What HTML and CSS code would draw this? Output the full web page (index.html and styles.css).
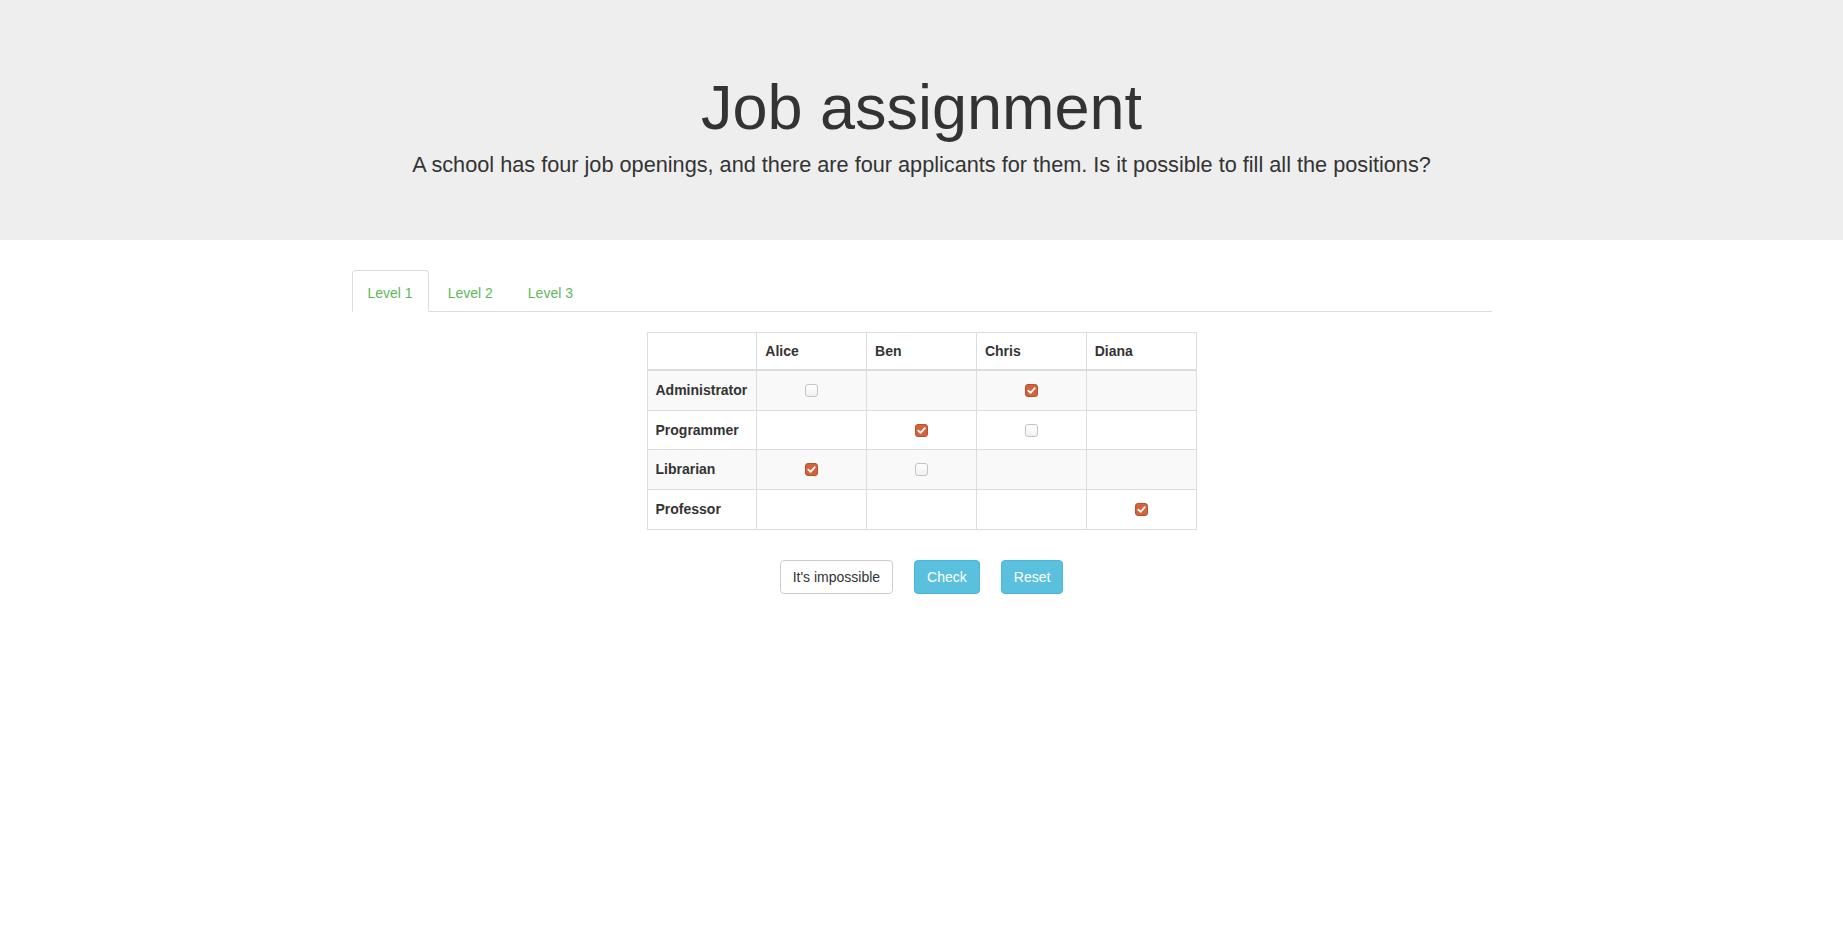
FILE: index.html
```html
<!DOCTYPE html>
<html lang="en">
<head>
<meta charset="utf-8">
<title>Job assignment</title>
<link rel="stylesheet" href="styles.css">
</head>
<body>
<header class="jumbotron">
  <h1 class="title">Job assignment</h1>
  <p class="lead">A school has four job openings, and there are four applicants for them. Is it possible to fill all the positions?</p>
</header>
<main class="container">
  <ul class="tabs">
    <li class="tab active"><a href="#">Level 1</a></li>
    <li class="tab"><a href="#">Level 2</a></li>
    <li class="tab"><a href="#">Level 3</a></li>
  </ul>
  <table class="grid">
    <thead>
      <tr><th></th><th>Alice</th><th>Ben</th><th>Chris</th><th>Diana</th></tr>
    </thead>
    <tbody>
      <tr>
        <th>Administrator</th>
        <td class="c"><span class="cb"></span></td>
        <td></td>
        <td class="c"><span class="cb on"><svg viewBox="0 0 13 13" width="13" height="13"><path d="M3.3 6.6 L5.6 8.9 L9.8 4.2" fill="none" stroke="#fff" stroke-width="1.8" stroke-linecap="round" stroke-linejoin="round"/></svg></span></td>
        <td></td>
      </tr>
      <tr>
        <th>Programmer</th>
        <td></td>
        <td class="c"><span class="cb on"><svg viewBox="0 0 13 13" width="13" height="13"><path d="M3.3 6.6 L5.6 8.9 L9.8 4.2" fill="none" stroke="#fff" stroke-width="1.8" stroke-linecap="round" stroke-linejoin="round"/></svg></span></td>
        <td class="c"><span class="cb"></span></td>
        <td></td>
      </tr>
      <tr>
        <th>Librarian</th>
        <td class="c"><span class="cb on"><svg viewBox="0 0 13 13" width="13" height="13"><path d="M3.3 6.6 L5.6 8.9 L9.8 4.2" fill="none" stroke="#fff" stroke-width="1.8" stroke-linecap="round" stroke-linejoin="round"/></svg></span></td>
        <td class="c"><span class="cb"></span></td>
        <td></td>
        <td></td>
      </tr>
      <tr>
        <th>Professor</th>
        <td></td>
        <td></td>
        <td></td>
        <td class="c"><span class="cb on"><svg viewBox="0 0 13 13" width="13" height="13"><path d="M3.3 6.6 L5.6 8.9 L9.8 4.2" fill="none" stroke="#fff" stroke-width="1.8" stroke-linecap="round" stroke-linejoin="round"/></svg></span></td>
      </tr>
    </tbody>
  </table>
  <div class="actions">
    <button class="btn btn-default" type="button">It's impossible</button>
    <button class="btn btn-info" type="button">Check</button>
    <button class="btn btn-info" type="button">Reset</button>
  </div>
</main>
</body>
</html>
```
FILE: styles.css
```css
* { box-sizing: border-box; }
html, body { margin: 0; padding: 0; }
body {
  font-family: "Liberation Sans", Arial, sans-serif;
  font-size: 14px;
  line-height: 20px;
  color: #333;
  background: #fff;
}
.jumbotron {
  height: 240px;
  background: #eee;
  text-align: center;
  padding-top: 73px;
}
.title {
  margin: 0;
  font-size: 63px;
  line-height: 69px;
  font-weight: 400;
  color: #333;
}
.lead {
  margin: 8px 0 0;
  font-size: 21.7px;
  line-height: 29px;
  font-weight: 400;
}
.container {
  width: 1140px;
  margin: 30px auto 0;
}
.tabs {
  display: flex;
  list-style: none;
  margin: 0;
  padding: 0;
  border-bottom: 1px solid #ddd;
}
.tab {
  margin-bottom: -1px;
  margin-right: 3px;
}
.tab a {
  display: block;
  padding: 12px 15px 8px;
  line-height: 20px;
  border: 1px solid transparent;
  border-radius: 4px 4px 0 0;
  color: #5cb85c;
  text-decoration: none;
}
.tab.active a {
  border-color: #ddd #ddd transparent;
  background: #fff;
}
.grid {
  width: 550px;
  margin: 20px auto 0;
  border-collapse: collapse;
  table-layout: fixed;
}
.grid th, .grid td {
  border: 1px solid #ddd;
  padding: 8px;
  text-align: left;
  vertical-align: middle;
  font-weight: 700;
  line-height: 20px;
}
.grid thead th { border-bottom: 2px solid #ddd; }
.grid tbody th, .grid tbody td { line-height: 22.7px; }
.grid tbody tr:nth-child(odd) { background: #f9f9f9; }
.grid td.c { text-align: center; }
.cb {
  display: inline-block;
  width: 13px;
  height: 13px;
  vertical-align: middle;
  border: 1px solid #c4c4c4;
  border-radius: 3px;
  background: linear-gradient(#fff, #f1f1f1);
  position: relative;
  top: -1px;
}
.cb.on {
  border-color: #b5512f;
  background: #d4623b;
}
.cb svg { display: block; margin: -1px 0 0 -1px; }
.actions {
  display: flex;
  justify-content: center;
  gap: 21px;
  margin-top: 30px;
}
.btn {
  font-family: "Liberation Sans", Arial, sans-serif;
  font-size: 14px;
  line-height: 20px;
  padding: 6px 12px;
  border: 1px solid transparent;
  border-radius: 4px;
  cursor: pointer;
}
.btn-default {
  background: #fff;
  border-color: #ccc;
  color: #333;
}
.btn-info {
  background: #5bc0de;
  border-color: #46b8da;
  color: #fff;
}
```
